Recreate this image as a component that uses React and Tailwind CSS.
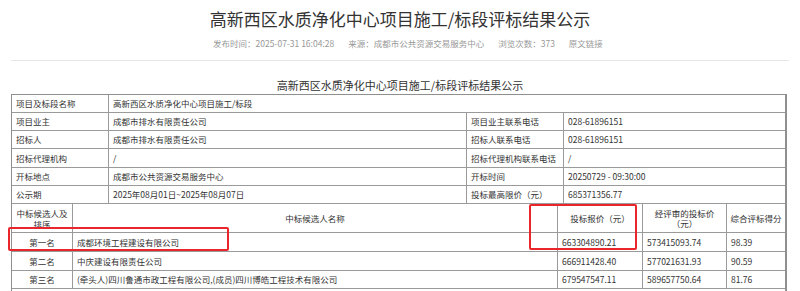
import React from "react";

const CJK = "font-['Noto_Sans_CJK_SC','Noto_Sans',sans-serif]";

const TOP_ROWS = [
  ["项目业主", "成都市排水有限责任公司", "项目业主联系电话", "028-61896151", "h-[18px]"],
  ["招标人", "成都市排水有限责任公司", "招标人联系电话", "028-61896151", "h-[18px]"],
  ["招标代理机构", "/", "招标代理机构联系电话", "/", "h-[19px]"],
  ["开标地点", "成都市公共资源交易服务中心", "开标时间", "20250729 - 09:30:00", "h-[18px]"],
  ["公示期", "2025年08月01日~2025年08月07日", "投标最高限价（元）", "685371356.77", "h-[18px]"],
];

const CANDIDATES = [
  ["第一名", "成都环境工程建设有限公司", "663304890.21", "573415093.74", "98.39", "h-[19px]"],
  ["第二名", "中庆建设有限责任公司", "666911428.40", "577021631.93", "90.59", "h-[19px]"],
  [
    "第三名",
    "(牵头人)四川鲁通市政工程有限公司,(成员)四川博皓工程技术有限公司",
    "679547547.11",
    "589657750.64",
    "81.76",
    "h-[18px]",
  ],
];

const Cell = ({ w, children, center, last }) => (
  <div
    className={`${w} h-full flex items-center px-[4px] whitespace-nowrap overflow-hidden ${
      center ? "justify-center text-center" : ""
    } ${last ? "" : "border-r border-[#9a9a9a]"}`}
  >
    {children}
  </div>
);

export default function App() {
  return (
    <div className={`relative w-[800px] h-[291px] overflow-hidden bg-white text-[#333] ${CJK}`}>
      {/* title */}
      <div className="pt-[6px]">
        <h1 className="h-[25px] leading-[25px] text-center text-[17px] text-[#333]">
          高新西区水质净化中心项目施工/标段评标结果公示
        </h1>
        <div className="mt-[6px] h-[12px] leading-[12px] flex justify-center gap-[14px] text-[8.5px] text-[#999] pl-[16px]">
          <span>发布时间：2025-07-31 16:04:28</span>
          <span>来源：成都市公共资源交易服务中心</span>
          <span>浏览次数：373</span>
          <span>原文链接</span>
        </div>
        <div className="mx-[11px] mt-[11px] border-t border-[#e6e6e6]" />
      </div>

      {/* subtitle */}
      <div className="mt-[17px] h-[14px] leading-[14px] text-center text-[11px] text-[#333]">
        高新西区水质净化中心项目施工/标段评标结果公示
      </div>

      {/* table */}
      <div className="ml-[11px] mt-[2px] w-[776px] border-l border-t border-r-2 border-[#8f8f8f] text-[8.5px]">
        <div className="flex h-[18px] border-b border-[#9a9a9a]">
          <Cell w="w-[97px]">项目及标段名称</Cell>
          <Cell w="flex-1" last>
            高新西区水质净化中心项目施工/标段
          </Cell>
        </div>
        {TOP_ROWS.map(([a, b, c, d, h]) => (
          <div key={a} className={`flex ${h} border-b border-[#9a9a9a]`}>
            <Cell w="w-[97px]">{a}</Cell>
            <Cell w="w-[358px]">{b}</Cell>
            <Cell w="w-[97px]">{c}</Cell>
            <Cell w="flex-1" last>
              {d}
            </Cell>
          </div>
        ))}

        {/* candidates header */}
        <div className="flex h-[29px] border-b border-[#9a9a9a] leading-[10.5px]">
          <div className="w-[61px] h-full flex items-start justify-center text-center pt-[4px] border-r border-[#9a9a9a] overflow-hidden">
            <span>
              中标候选人及
              <br />
              排序
            </span>
          </div>
          <Cell w="w-[485px]" center>
            中标候选人名称
          </Cell>
          <Cell w="w-[85px]" center>
            投标报价（元）
          </Cell>
          <div className="w-[84px] h-full flex items-center justify-center text-center border-r border-[#9a9a9a]">
            <span>
              经评审的投标价
              <br />
              （元）
            </span>
          </div>
          <Cell w="flex-1" center last>
            综合评标得分
          </Cell>
        </div>
        {CANDIDATES.map(([rank, name, bid, rev, score, h]) => (
          <div key={rank} className={`flex ${h} border-b border-[#9a9a9a]`}>
            <Cell w="w-[61px]" center>
              {rank}
            </Cell>
            <Cell w="w-[485px]">{name}</Cell>
            <Cell w="w-[85px]">{bid}</Cell>
            <Cell w="w-[84px]">{rev}</Cell>
            <Cell w="flex-1" last>
              {score}
            </Cell>
          </div>
        ))}
        <div className="h-[20px]" />
      </div>

      {/* highlight boxes */}
      <div className="absolute left-[8px] top-[227px] w-[221px] h-[24px] border-2 border-[#e8262b] rounded-[2px]" />
      <div className="absolute left-[529px] top-[204px] w-[108px] h-[46px] border-2 border-[#e8262b] rounded-[2px]" />
    </div>
  );
}
